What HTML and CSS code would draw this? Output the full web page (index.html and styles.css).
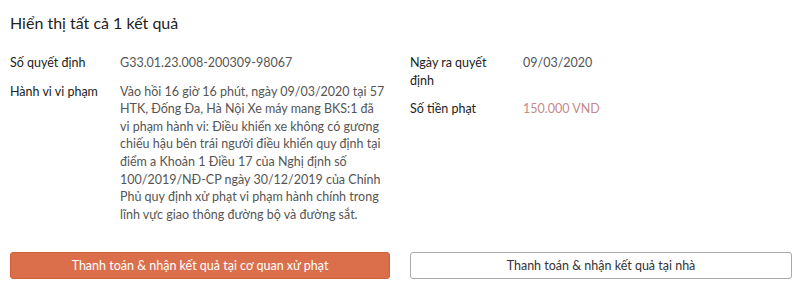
FILE: index.html
```html
<!DOCTYPE html>
<html lang="vi">
<head>
  <meta charset="UTF-8" />
  <meta name="viewport" content="width=device-width, initial-scale=1" />
  <title>Kết quả tra cứu</title>
  <link rel="stylesheet" href="styles.css">
</head>
<body>

<div class="ket-qua">
  <h2 class="tieu-de">Hiển thị tất cả 1 kết quả</h2>

  <div class="chi-tiet">
    <div class="cot">
      <div class="dong">
        <div class="nhan">Số quyết định</div>
        <div class="gia-tri">G33.01.23.008-200309-98067</div>
      </div>
      <div class="dong">
        <div class="nhan">Hành vi vi phạm</div>
        <div class="gia-tri">Vào hồi 16 giờ 16 phút, ngày 09/03/2020 tại 57 HTK, Đống Đa, Hà Nội Xe máy mang BKS:1 đã vi&nbsp;phạm hành vi: Điều khiển xe không có gương chiếu hậu bên trái người điều khiển quy định tại điểm a Khoản 1 Điều 17 của Nghị định số 100/2019/NĐ-CP ngày 30/12/2019 của Chính Phủ quy định xử phạt vi phạm hành chính trong lĩnh vực giao thông đường bộ và đường sắt.</div>
      </div>
    </div>
    <div class="cot">
      <div class="dong">
        <div class="nhan">Ngày ra quyết định</div>
        <div class="gia-tri">09/03/2020</div>
      </div>
      <div class="dong">
        <div class="nhan">Số tiền phạt</div>
        <div class="gia-tri so-tien">150.000 VND</div>
      </div>
    </div>
  </div>

  <div class="nut-bar">
    <button class="nut nut-cam">Thanh toán &amp; nhận kết quả tại cơ quan xử phạt</button>
    <button class="nut nut-trang">Thanh toán &amp; nhận kết quả tại nhà</button>
  </div>
</div>

</body>
</html>
```

FILE: styles.css
```css
body {
  margin: 0;
  padding: 0;
  background: #fff;
  font-family: 'Lato', 'Noto Sans', sans-serif;
  color: #333;
}
.ket-qua {
  padding: 11px 6px 0 10px;
}
.tieu-de {
  margin: 0;
  font-size: 16px;
  font-weight: 400;
  color: #222;
  line-height: 24px;
}
.chi-tiet {
  display: grid;
  grid-template-columns: 380px 1fr;
  gap: 20px;
  margin-top: 19px;
}
.dong {
  display: flex;
  font-size: 12.5px;
  line-height: 17.6px;
  margin-bottom: 11px;
}
.nhan {
  width: 110px;
  flex-shrink: 0;
  color: #222;
}
.cot:last-child .nhan {
  width: 95px;
  margin-right: 18px;
}
.gia-tri {
  flex: 1;
  color: #555;
}
.so-tien {
  color: #c48a88;
}
.nut-bar {
  display: grid;
  grid-template-columns: 380px 1fr;
  gap: 20px;
  margin-top: 18px;
}
.nut {
  font-family: inherit;
  font-size: 12.5px;
  height: 27px;
  border-radius: 3px;
  cursor: pointer;
}
.nut-cam {
  background: #db6f4c;
  border: 1px solid #d0603c;
  color: #fff;
}
.nut-trang {
  background: #fff;
  border: 1px solid #aaa;
  color: #333;
}
```
